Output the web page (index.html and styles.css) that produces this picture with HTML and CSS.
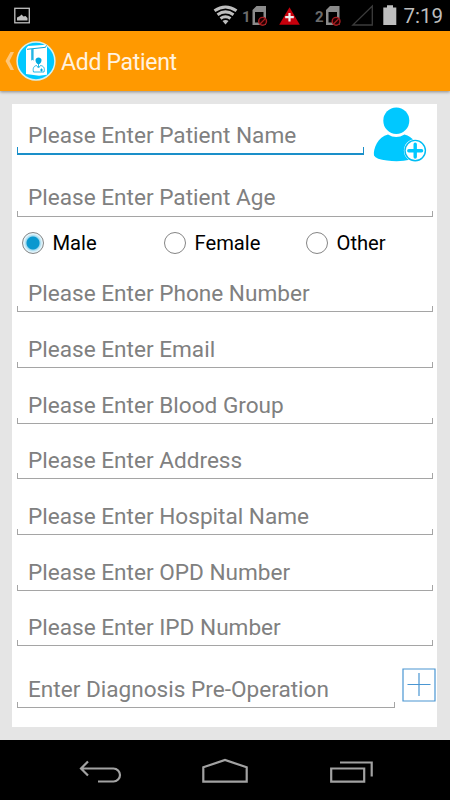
FILE: index.html
```html
<!DOCTYPE html>
<html lang="en">
<head>
  <meta charset="UTF-8" />
  <meta name="viewport" content="width=device-width, initial-scale=1.0" />
  <title>Add Patient</title>
  <link rel="stylesheet" href="styles.css">
</head>
<body>
  <header class="status-bar">
    <svg class="status-icons" width="450" height="31" viewBox="0 0 450 31">
      <!-- screenshot notification -->
      <rect x="14.8" y="8.3" width="14.5" height="14.5" fill="none" stroke="#c0c0c0" stroke-width="1.3"/>
      <path d="M17 20.5v-3l3-1.500 1.500-1.500 2 2 2-.5 2 2v2.500z" fill="#c0c0c0"/>
      <!-- wifi -->
      <g fill="none" stroke="#bebebe" stroke-width="3">
        <path d="M214.500 10.800q11-7.600 22 0"/>
        <path d="M217.500 14.700q8-5.600 16 0"/>
        <path d="M220.500 18.500q5-3.600 10 0"/>
      </g>
      <path d="M222.500 21q3-2 6 0l-3 3.500z" fill="#bebebe"/>
      <!-- sim 1 and sim 2 -->
      <g id="sim">
        <path fill-rule="evenodd" d="M252.500 10l4-4h9.500v19h-13.500zM255 12v10.500h8.500V12z" fill="#8b8b8b"/>
        <circle cx="262.600" cy="21.300" r="3.900" fill="#210000" stroke="#a81c20" stroke-width="1.400"/>
        <path d="M260 24l5.300-5.400" stroke="#a81c20" stroke-width="1.300"/>
      </g>
      <use href="#sim" x="73.500"/>
      <!-- emergency -->
      <path d="M289.500 7.300l10.300 17.400h-20.600z" fill="#c7000c"/>
      <path d="M289.500 13v8.500M285.200 17.200h8.600" stroke="#eee" stroke-width="2.200"/>
      <!-- no signal -->
      <path d="M372.300 6v19h-19.500z" fill="none" stroke="#3c3c3c" stroke-width="1.300"/>
      <!-- battery -->
      <path d="M387 5.300h6v2.200h3.300V25H383.300V7.500H387z" fill="#bebebe"/>
    </svg>
    <span class="sim-number first">1</span>
    <span class="sim-number second">2</span>
    <span class="clock">7:19</span>
  </header>

  <div class="action-bar">
    <svg class="up" width="9" height="20" viewBox="0 0 9 20"><path d="M9 1H5.500L.5 10l5 9H9L4.500 10z" fill="#ffc677"/></svg>
    <svg class="logo" width="40" height="40" viewBox="0 0 40 40">
      <circle cx="20" cy="20" r="18.900" fill="#00c8ff" stroke="#d8f0ee" stroke-width="1.500"/>
      <path d="M10 7.500l2-2.500 18-1.300 1 1v29l-8 1-13-1.700z" fill="#fff"/>
      <path d="M11 8.300l18.500-2 1-2" fill="none" stroke="#00a9dc" stroke-width="1"/>
      <path d="M15.200 8v11.800l1.200-1 1.200 1V8z" fill="#23b5e4"/>
      <path d="M19.500 19c0-3.500 6-3.500 6 0 0 2-1 4-3 4.500-2-.5-3-2.500-3-4.500z" fill="#00a9df"/>
      <path d="M22.500 23v3M17.500 31c-1-4 .5-6 3-6.500l2 2.500 2-2.500c3.500.5 4.500 3 3.500 6.500z" fill="none" stroke="#25b9e7"/>
      <path d="M24 29h3M25.500 27.500v3" stroke="#00a9df" stroke-width="1"/>
    </svg>
    <h1 class="title">Add Patient</h1>
  </div>

  <main class="content">
    <form class="card">
      <div class="row row-name">
        <div class="field focused"><span>Please Enter Patient Name</span></div>
        <svg class="add-photo" width="56" height="58" viewBox="0 0 56 58">
          <ellipse cx="24.300" cy="15.700" rx="13" ry="13.300" fill="#00c8ff"/>
          <path d="M16 29.500q8 5 16.500 0C41 31.500 45 39 46 46q.5 7-7 8.500-12 3-24 1-11-1-13-5C1 44 6 31.500 16 29.500z" fill="#00c8ff"/>
          <circle cx="43.200" cy="45.600" r="11.300" fill="#fff"/>
          <circle cx="43.200" cy="45.600" r="10.200" fill="#fff" stroke="#00bdf3" stroke-width="1.400"/>
          <path d="M43.200 39.300v12.800M36.800 45.700h12.800" stroke="#00c8ff" stroke-width="3.400" stroke-linecap="round"/>
        </svg>
      </div>
      <div class="field age"><span>Please Enter Patient Age</span></div>
      <div class="genders">
        <label class="gender"><i class="radio checked"></i>Male</label>
        <label class="gender"><i class="radio"></i>Female</label>
        <label class="gender"><i class="radio"></i>Other</label>
      </div>
      <div class="field"><span>Please Enter Phone Number</span></div>
      <div class="field"><span>Please Enter Email</span></div>
      <div class="field"><span>Please Enter Blood Group</span></div>
      <div class="field"><span>Please Enter Address</span></div>
      <div class="field"><span>Please Enter Hospital Name</span></div>
      <div class="field"><span>Please Enter OPD Number</span></div>
      <div class="field"><span>Please Enter IPD Number</span></div>
      <div class="row row-diagnosis">
        <div class="field"><span>Enter Diagnosis Pre-Operation</span></div>
        <svg class="add-diagnosis" width="34" height="34" viewBox="0 0 34 34">
          <path d="M1 1h32v32H1zM17 5v23M5.500 16.500h23" fill="none" stroke="#4a96d2" stroke-width="1.200"/>
        </svg>
      </div>
    </form>
  </main>

  <nav class="nav-bar">
    <svg width="450" height="60" viewBox="0 0 450 60" fill="none" stroke="#a2a2a2" stroke-width="2.200">
      <path d="M88 21.500l-7 7 7 7M81 28.500h32.500a6.400 6.400 0 0 1 0 13H98"/>
      <path d="M203.300 41.600V27.300L225 20l21.700 7.300v14.300z"/>
      <path d="M331.200 28.500h33v13.200h-33zM340 22.500h31.700v14"/>
    </svg>
  </nav>
</body>
</html>
```
FILE: styles.css
```css
* {
  box-sizing: border-box;
}

body {
  margin: 0;
  width: 450px;
  height: 800px;
  display: flex;
  flex-direction: column;
  overflow: hidden;
  background: #e5e5e5;
  font-family: Roboto, sans-serif;
}

svg {
  display: block;
  flex: none;
}

/* status bar */
.status-bar {
  position: relative;
  height: 31px;
  flex: none;
  background: #000;
}

.sim-number {
  position: absolute;
  top: 8px;
  font-size: 15px;
  line-height: 18px;
  font-weight: 700;
  color: #6b6b6b;
}

.first {
  left: 242px;
}

.second {
  left: 315px;
}

.clock {
  position: absolute;
  top: 4px;
  right: 7px;
  font-size: 20.5px;
  line-height: 24px;
  color: #bebebe;
}

/* action bar */
.action-bar {
  display: flex;
  align-items: center;
  height: 60px;
  flex: none;
  padding-left: 5px;
  background: #ff9900;
  box-shadow: 0 1px 3px rgba(0, 0, 0, 0.4);
}

.logo {
  margin-left: 2px;
}

.title {
  margin: 4px 0 0 5px;
  font-size: 23px;
  line-height: 28px;
  font-weight: 400;
  letter-spacing: -0.3px;
  color: #fff3e0;
}

/* form */
.content {
  flex: 1;
  padding: 13px 13px 0 12px;
}

.card {
  height: 623px;
  padding: 0 2px 0 5px;
  background: #fff;
}

.field {
  position: relative;
  display: flex;
  align-items: flex-end;
  width: 416px;
  height: 55.7px;
  padding: 0 11px 5px;
  font-size: 22.6px;
  line-height: 26px;
  color: #808080;
  white-space: nowrap;
}

/* underline with the small ticks at both ends */
.field::after {
  content: "";
  position: absolute;
  left: 0;
  right: 0;
  bottom: 0;
  height: 5px;
  border: 1px solid #a5a5a5;
  border-top: 0;
}

.focused::after {
  height: 6px;
  border-color: #1a8fc9;
  border-bottom-width: 2px;
}

.row {
  display: flex;
}

.row-name {
  height: 51px;
}

.row-name .field {
  width: 347px;
  height: 51px;
  padding-bottom: 6px;
}

.add-photo {
  margin: 1px 0 0 8px;
}

.age {
  height: 62px;
  padding-bottom: 6px;
}

.genders {
  display: flex;
  height: 39.5px;
  padding: 14px 0 0 4.5px;
}

.gender {
  display: flex;
  flex: none;
  align-items: center;
  width: 142px;
  height: 23px;
  font-size: 20.2px;
  color: #000;
}

.radio {
  width: 22px;
  height: 22px;
  margin-right: 9px;
  border: 1px solid #858585;
  border-radius: 50%;
}

.checked {
  background: radial-gradient(circle, #0a98cf 0 6px, #9ed8ee 7px, #e2f4fb 9px);
}

.row-diagnosis .field {
  flex: none;
  width: 378px;
  height: 61.5px;
}

.add-diagnosis {
  margin: 22px 0 0 7px;
}

/* navigation bar */
.nav-bar {
  height: 60px;
  flex: none;
  background: #000;
}
```
